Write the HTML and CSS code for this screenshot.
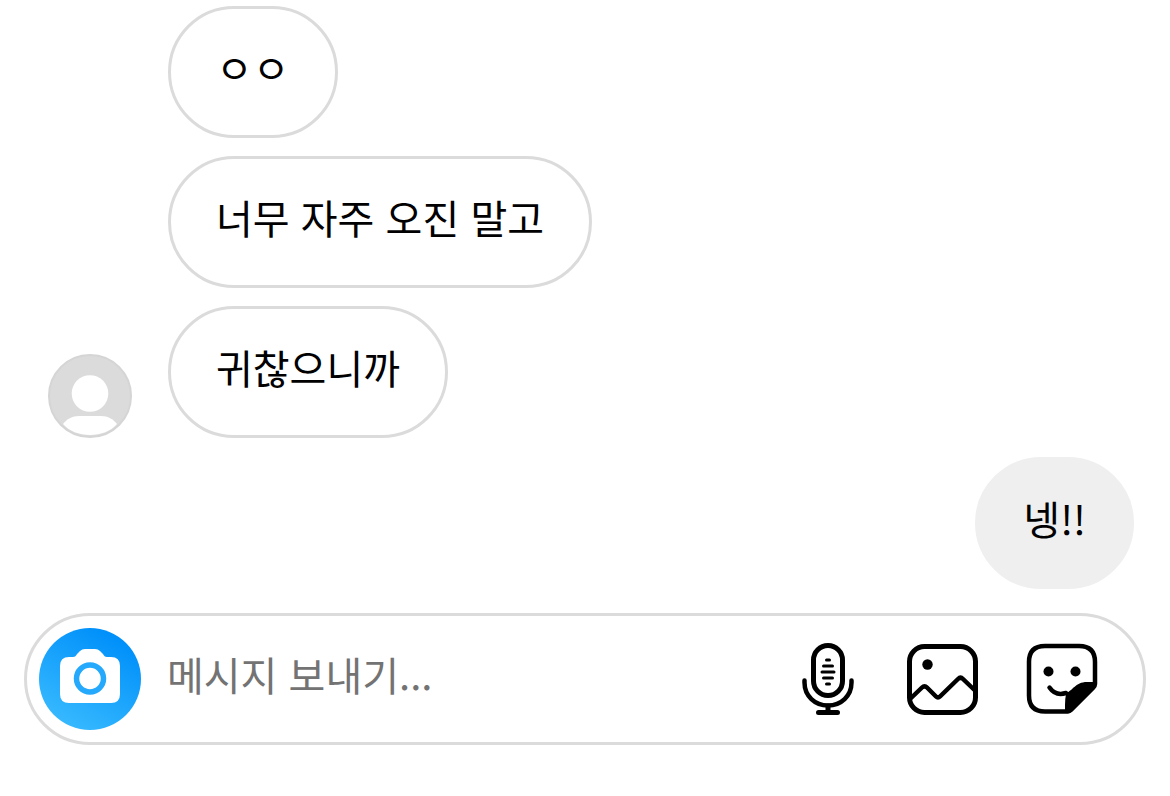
FILE: index.html
```
<!DOCTYPE html>
<html lang="ko">
<head>
    <meta charset="UTF-8">
    <meta name="viewport" content="width=device-width, initial-scale=1.0">
    <title>메시지</title>
    <link rel="stylesheet" href="styles.css">
</head>
<body>
    <main class="chat">
        <!-- 받은 메시지 -->
        <div class="received">
            <svg class="avatar" viewBox="0 0 84 84" aria-hidden="true">
                <circle cx="42" cy="42" r="41" fill="#dbdbdb" stroke="#d5d5d5" stroke-width="2"/>
                <circle cx="42" cy="39.500" r="18.300" fill="#fff"/>
                <path d="M15 70C19 65 24 62 31 62H53C60 62 65 65 69 70C63 77 53 81 42 81S21 77 15 70Z" fill="#fff"/>
            </svg>
            <div class="bubbles">
                <p class="bubble">ㅇㅇ</p>
                <p class="bubble">너무 자주 오진 말고</p>
                <p class="bubble">귀찮으니까</p>
            </div>
        </div>
        <!-- 보낸 메시지 -->
        <div class="sent">
            <p class="bubble">넹!!</p>
        </div>
        <!-- 입력창 -->
        <form class="composer">
            <button type="button" class="camera-btn" aria-label="카메라">
                <svg width="60" height="56" viewBox="0 0 60 56">
                    <path d="M9 9H13C15 9 16 8 17 6L20 3Q22 1 25 1H35Q38 1 40 3L43 6C44 8 45 9 47 9H51Q60 9 60 18V46Q60 55 51 55H9Q0 55 0 46V18Q0 9 9 9Z" fill="#fff"/>
                    <circle cx="30" cy="30.500" r="13.500" fill="none" stroke="#25a9fc" stroke-width="5.500"/>
                </svg>
            </button>
            <input type="text" class="message-input" aria-label="메시지" placeholder="메시지 보내기...">
            <button type="button" class="icon-btn" aria-label="음성 메시지">
                <svg width="60" height="74" viewBox="-4 0 60 74" fill="none" stroke="#000" stroke-linecap="round">
                    <rect x="11.500" y="3.500" width="29" height="50" rx="14.500" stroke-width="5"/>
                    <path d="M2.500 38.500V40.500C2.500 54 13 63.500 26 63.500S49.500 54 49.500 40.500V38.500" stroke-width="4.500"/>
                    <path d="M26 64V70M16.500 70.500H35.500" stroke-width="5"/>
                    <path d="M24.500 18H27.500M21.500 24H30.500M20 30H32M21.500 36H30.500M24.500 42H27.500" stroke-width="3"/>
                </svg>
            </button>
            <button type="button" class="icon-btn" aria-label="사진">
                <svg width="72" height="72" viewBox="0 0 72 72" fill="none" stroke="#000" stroke-width="5" stroke-linejoin="round">
                    <rect x="3.500" y="3.500" width="66" height="66" rx="15"/>
                    <circle cx="21.500" cy="21.500" r="5.200" fill="#000" stroke="none"/>
                    <path d="M4 56L16 44.500Q18.500 42 21 44.500L30 53.500Q32 55.500 34 53.500L52 36Q54.500 33.500 57 36L69 47.500" stroke-width="4.500"/>
                </svg>
            </button>
            <button type="button" class="icon-btn" aria-label="스티커">
                <svg width="72" height="72" viewBox="0 0 72 72" fill="none" stroke="#000" stroke-width="4.500" stroke-linecap="round" stroke-linejoin="round">
                    <path d="M42 68.500H19Q3 68.500 3 52.500V19Q3 3 19 3H53Q69 3 69 19V41Q69 43 67 45L45 67Q43.500 68.500 42 68.500Z"/>
                    <circle cx="22.500" cy="28.500" r="5" fill="#000" stroke="none"/>
                    <circle cx="49.500" cy="28.500" r="5" fill="#000" stroke="none"/>
                    <path d="M23.500 44.500C28 51 34 52 40 50"/>
                    <path d="M38.500 51C47 48 49 39 61 39H70V43L45 69L39 70V62Q39 56 40 51Z" fill="#000" stroke="none"/>
                </svg>
            </button>
        </form>
    </main>
</body>
</html>
```

FILE: styles.css
```
* {
    box-sizing: border-box;
}

body {
    margin: 0;
    background-color: #fff;
    color: #000;
    font-family: "Noto Sans CJK KR", sans-serif;
    font-size: 40px;
    line-height: 60px;
}

.chat {
    padding: 6px 24px 48px;
}

/* 말풍선 */
.received {
    display: flex;
    align-items: flex-end;
    gap: 36px;
    padding-left: 24px;
}

.avatar {
    flex: none;
    width: 84px;
    height: 84px;
}

.bubbles {
    display: flex;
    flex-direction: column;
    align-items: flex-start;
    gap: 18px;
}

.bubble {
    margin: 0;
    padding: 28px 45px 38px;
    border: 3px solid #dbdbdb;
    border-radius: 66px;
}

.sent {
    display: flex;
    justify-content: flex-end;
    margin-top: 19px;
    padding-right: 12px;
}

.sent .bubble {
    background-color: #efefef;
    border-color: #efefef;
}

/* 입력창 */
.composer {
    display: flex;
    align-items: center;
    height: 132px;
    margin-top: 24px;
    padding: 0 45px 0 12px;
    border: 3px solid #dbdbdb;
    border-radius: 66px;
}

.camera-btn {
    display: flex;
    flex: none;
    align-items: center;
    justify-content: center;
    width: 102px;
    height: 102px;
    padding: 0 0 6px;
    border: none;
    border-radius: 50%;
    background: linear-gradient(30deg, #40c0ff, #0090fa 85%);
    cursor: pointer;
}

.message-input {
    flex: 1;
    min-width: 0;
    margin-left: 26px;
    padding: 0 0 10px;
    border: none;
    outline: none;
    background: none;
    color: #000;
    font: inherit;
}

.message-input::placeholder {
    color: #737373;
    opacity: 1;
}

.icon-btn {
    display: flex;
    flex: none;
    margin-left: 48px;
    padding: 0;
    border: none;
    background: none;
    cursor: pointer;
}
```
